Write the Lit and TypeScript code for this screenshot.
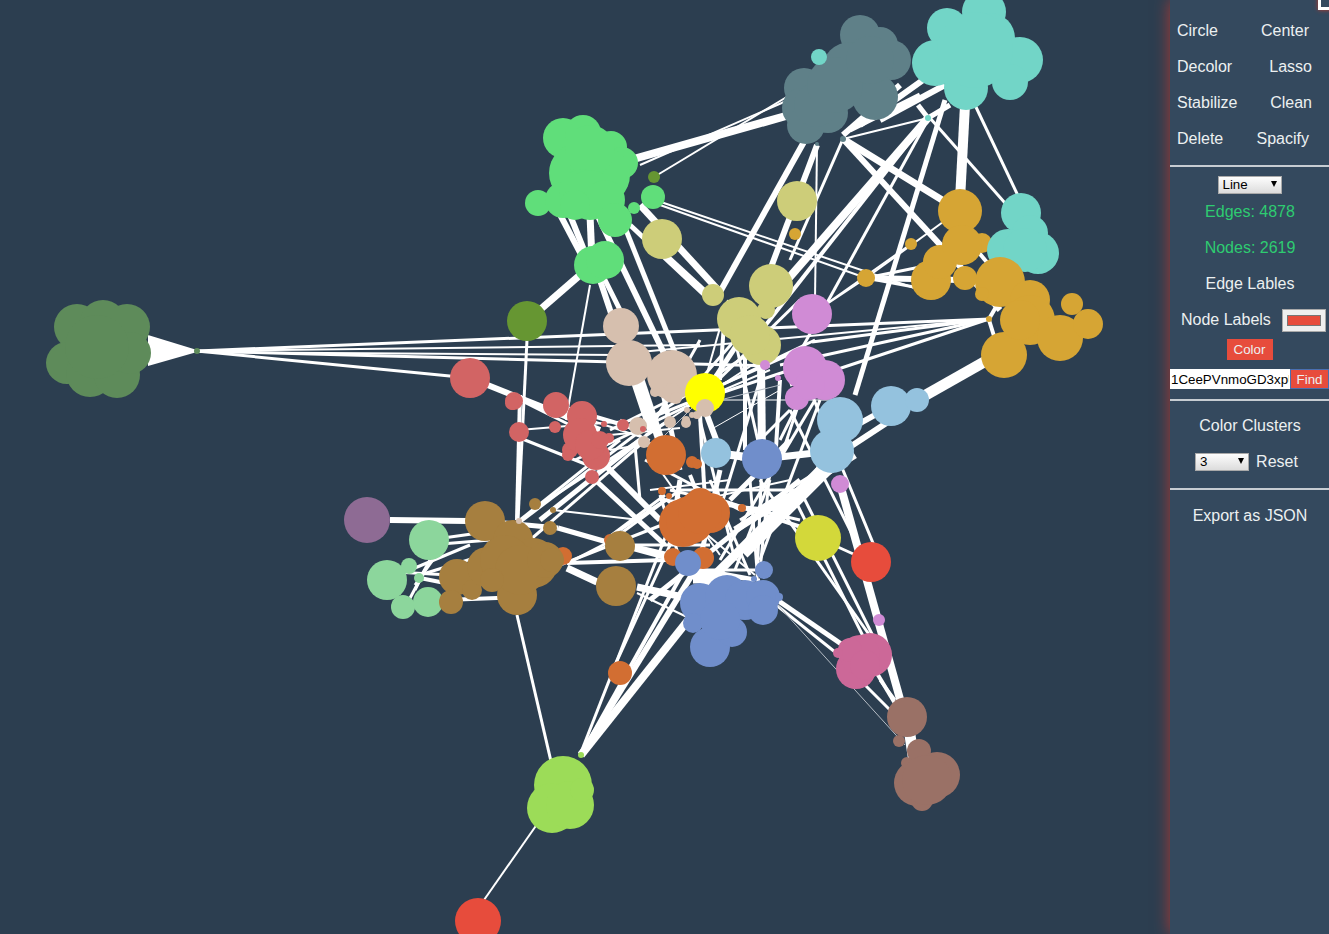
import { LitElement, html, css, svg } from "lit";
import { customElement } from "lit/decorators.js";

type C = [number, number, number];
const CL: Record<string, { c: string; n: C[] }> = {
  dgreen: { c: "#5e8b5a", n: [[77,327,23],[103,323,23],[127,327,23],[67,363,21],[90,373,24],[117,375,23],[130,353,21],[97,347,32],[197,351,3]] },
  purple: { c: "#8e6b94", n: [[367,520,23]] },
  lgreen: { c: "#8cd69c", n: [[429,540,20],[387,580,20],[409,566,8],[403,607,12],[428,602,15],[419,578,5]] },
  orange: { c: "#d26e32", n: [[563,556,9],[610,540,6],[620,673,12],[666,455,20],[692,462,6],[697,464,5],[662,491,4],[669,496,3],[742,508,4],[683,523,24],[710,513,20],[700,503,15],[690,520,24],[700,512,22],[673,557,9],[703,558,11]] },
  brown: { c: "#a67f3f", n: [[485,521,20],[513,540,20],[517,595,20],[616,586,20],[620,546,15],[457,577,18],[451,602,12],[472,590,10],[535,504,6],[553,510,3],[550,528,7],[487,567,20],[533,563,25],[505,560,25],[520,570,25],[492,580,12],[545,560,18],[552,560,12]] },
  blue: { c: "#708ecb", n: [[762,459,20],[688,563,13],[764,570,9],[754,579,3],[700,603,20],[727,597,22],[745,600,20],[763,597,17],[763,610,15],[710,647,20],[732,632,15],[693,623,10],[720,620,20],[779,597,4]] },
  lblue: { c: "#94c2de", n: [[840,420,23],[832,451,22],[891,406,20],[917,400,12],[716,453,15]] },
  olive: { c: "#cdcd79", n: [[797,201,20],[662,239,20],[713,295,11],[771,286,22],[739,319,22],[761,345,20],[750,335,20],[766,310,9]] },
  tan: { c: "#d6bfae", n: [[621,326,18],[629,363,23],[672,375,25],[638,426,9],[670,422,6],[644,442,6],[686,420,4],[692,415,3],[672,393,10],[655,392,5],[676,398,6],[687,410,3],[686,423,5],[697,415,4],[519,521,3]] },
  yellow: { c: "#ffff00", n: [[705,393,20]] },
  tan2: { c: "#d6bfae", n: [[705,408,9]] },
  mauve: { c: "#d08bd5", n: [[812,314,20],[805,368,22],[825,380,20],[797,398,12],[810,385,15],[840,484,9],[879,620,6],[765,365,5],[778,378,3]] },
  salmon: { c: "#d26464", n: [[470,378,20],[514,401,9],[512,403,7],[556,405,13],[519,432,10],[555,427,6],[582,416,15],[596,456,14],[592,477,7],[570,450,8],[568,455,6],[580,435,17],[590,445,15],[609,438,5],[604,424,3],[623,425,6],[643,429,3],[600,440,9]] },
  ogreen: { c: "#669632", n: [[527,321,20],[654,177,6]] },
  green: { c: "#60de7a", n: [[563,138,20],[583,133,18],[611,147,16],[622,163,16],[579,173,30],[600,175,30],[590,150,25],[538,203,13],[563,200,18],[583,193,24],[590,195,25],[605,200,20],[575,205,15],[615,220,17],[653,197,12],[634,208,6],[593,265,19],[605,260,19]] },
  dteal: { c: "#5f8088", n: [[860,35,20],[880,45,18],[891,60,20],[875,97,23],[804,88,20],[802,108,20],[806,125,19],[828,113,20],[816,105,22],[850,70,28],[835,85,28],[870,60,24],[843,139,3],[817,144,2]] },
  goldb: { c: "#d6a534", n: [[982,243,10]] },
  teal: { c: "#72d5c7", n: [[819,57,8],[928,118,3],[947,28,20],[984,12,22],[990,38,25],[1020,60,23],[1010,82,18],[966,88,22],[935,63,23],[975,50,38],[1021,213,20],[1030,233,18],[1038,253,21],[1008,250,21],[1025,250,22]] },
  gold: { c: "#d6a534", n: [[960,211,22],[795,234,6],[866,278,9],[911,244,6],[989,319,3],[931,280,20],[940,262,17],[962,245,20],[965,278,12],[1000,282,25],[1030,300,20],[1030,320,25],[1060,338,23],[1004,355,23],[1072,304,11],[1088,324,15],[1020,320,20],[982,294,7]] },
  lime: { c: "#9cdc58", n: [[563,785,29],[552,808,25],[570,805,24],[582,790,12],[581,755,3]] },
  red: { c: "#e74c3c", n: [[871,562,20],[478,921,23]] },
  ylime: { c: "#d3d83a", n: [[818,538,23]] },
  pink: { c: "#cc6898", n: [[870,655,22],[856,669,20],[860,655,20],[850,650,12],[838,653,5],[865,665,15]] },
  rosy: { c: "#9a7166", n: [[907,717,20],[899,741,6],[919,751,12],[937,775,23],[917,783,23],[922,800,11],[907,763,6],[927,780,25]] },
};

const E: number[][] = [
  [197,351,990,319,3],[197,351,470,378,3],[197,351,770,366,3],[197,351,700,345,2],[197,352,620,355,2],
  [989,319,812,342,3],[989,319,780,365,3],[989,319,790,385,3],[989,319,640,352,2],[989,320,1000,355,4],[989,319,1000,300,4],
  [630,160,800,112,8],[640,165,800,95,2],[654,177,790,95,2],
  [570,215,590,265,6],[555,205,585,262,6],[590,215,592,260,7],[600,280,650,430,6],[595,210,672,370,6],[620,215,690,390,5],[580,275,527,321,7],[590,285,566,420,2],
  [640,205,720,292,7],[630,225,710,300,5],[660,205,866,278,2],[655,200,935,295,2],[600,270,625,320,5],[650,240,710,295,4],
  [805,140,720,292,6],[817,145,770,270,6],[817,145,815,300,2],[843,139,790,260,3],[843,139,960,211,7],[843,139,1000,310,6],[843,139,928,118,2],[843,135,900,85,6],[860,125,930,75,6],[880,120,945,85,6],[850,130,920,95,5],
  [928,118,735,340,8],[928,118,750,345,4],[930,118,1020,220,3],[965,105,960,200,10],[975,105,1020,200,3],[925,125,790,370,3],[945,100,855,395,5],[918,105,928,118,5],[950,105,928,118,5],
  [866,278,960,280,6],[866,278,930,265,3],[866,278,930,290,3],[866,278,943,222,2],[866,278,812,314,2],[911,244,812,314,2],[960,230,1010,290,4],
  [917,400,1000,353,11],[891,406,830,440,6],[891,420,830,460,6],[850,440,700,590,9],[780,520,840,440,5],
  [716,453,762,459,8],[762,459,832,451,7],[761,360,762,459,8],[745,340,745,450,4],[762,459,757,580,3],[735,340,760,450,3],[800,400,780,460,3],[810,390,880,560,3],[790,410,865,560,3],
  [840,484,905,717,8],[818,538,871,562,3],[760,480,880,650,3],[790,490,865,640,3],[800,490,875,640,3],[770,595,850,650,5],[770,600,845,660,3],[860,680,900,720,3],[880,680,895,700,3],[875,670,905,720,4],[910,735,918,790,11],
  [581,755,720,580,8],[581,755,695,570,6],[581,755,690,560,4],[580,755,668,530,3],[615,665,670,545,3],[517,615,553,770,3],[477,910,540,820,2],
  [520,395,517,520,4],[527,340,518,520,3],[520,520,620,440,3],[390,520,467,521,6],[485,521,558,528,5],[558,528,607,542,5],[633,547,667,555,6],[620,546,690,565,3],[637,587,683,597,7],[637,593,687,617,2],[567,568,597,582,7],[567,563,667,560,4],[570,562,607,543,3],[560,565,700,510,3],[445,600,520,597,4],
  [429,540,500,530,3],[429,545,490,540,3],[410,570,470,545,3],[420,575,500,550,3],[415,585,440,550,3],[420,578,480,590,4],[415,590,425,570,3],[409,600,425,570,3],[395,572,450,575,3],[430,560,420,578,3],
  [470,378,600,430,6],[520,400,600,440,3],[556,405,640,430,4],[519,430,640,420,2],[520,438,600,470,3],
  [592,477,665,545,5],[600,460,660,520,6],[635,435,490,545,3],[640,440,540,520,5],[700,400,575,460,3],[670,420,540,505,3],
  [645,440,620,420,3],[590,420,650,440,2],[610,450,670,440,2],[610,435,680,428,2],
  [640,380,665,455,9],[660,380,680,470,5],[705,410,720,450,6],[700,415,705,500,4],[720,470,700,560,5],[700,420,735,560,3],[800,480,650,600,5],[770,480,735,570,3],
  [705,393,800,300,3],[705,393,740,340,5],[705,393,815,340,3],[710,390,800,350,3],[700,380,735,340,3],[715,395,790,370,3],[700,400,770,370,2],[720,400,850,400,1],[710,430,780,390,1],
  [640,425,770,340,3],[620,430,720,390,3],[610,430,710,380,3],[645,435,760,360,2],[650,430,700,340,3],[725,310,720,380,4],[728,300,705,380,2],
  [645,460,740,510,3],[660,470,720,555,2],[605,545,680,490,3],[605,540,665,495,3],[620,530,665,500,3],[610,545,710,545,3],[660,500,780,510,3],[680,490,800,490,3],[670,490,800,520,3],[660,495,680,560,3],[680,480,670,545,5],[690,475,700,500,4],
  [720,500,810,530,4],[730,500,790,440,5],[650,490,730,480,2],[660,495,755,575,2],[700,570,755,580,5],[700,575,760,580,3],[693,577,717,577,13],[680,570,760,570,3],[710,480,750,575,3],[750,480,757,570,3],[770,470,760,570,3],
  [735,530,855,455,7],[700,500,790,480,2],[740,520,820,470,3],[745,555,830,470,7],
  [780,380,775,465,4],[820,400,760,560,3],[790,410,740,460,3],[800,400,780,440,3],[815,400,720,560,3],[760,380,720,510,3],
  [635,445,640,500,3],[530,540,640,445,3],[553,510,640,520,2],
];
const GREY: number[][] = [[755,580,905,745,1],[660,440,700,400,1],[720,400,780,385,1]];

const FAN = "148,335 197,350 197,352 148,366";

@customElement("app-graph")
class AppGraph extends LitElement {
  static styles = css`
    :host { display: block; width: 100%; height: 100%; }
    svg { display: block; width: 100%; height: 100%; }
    .edge { stroke: #fff; stroke-linecap: butt; }
    .thin { stroke: #b5bcc4; }
    .fan { fill: #fff; }
  `;
  render() {
    const line = (e: number[], cls: string) => svg`<line class=${cls} x1=${e[0]} y1=${e[1]} x2=${e[2]} y2=${e[3]} stroke-width=${e[4]}></line>`;
    return html`<svg viewBox="0 0 1170 934" xmlns="http://www.w3.org/2000/svg">
      <polygon class="fan" points=${FAN}></polygon>
      ${E.map((e) => line(e, "edge"))}
      ${GREY.map((e) => line(e, "edge thin"))}
      ${Object.values(CL).map((g) => svg`<g fill=${g.c}>${g.n.map((n) => svg`<circle cx=${n[0]} cy=${n[1]} r=${n[2]}></circle>`)}</g>`)}
    </svg>`;
  }
}

@customElement("app-root")
class AppRoot extends LitElement {
  static styles = css`
    :host { display: block; height: 934px; background: #2c3e50; overflow: hidden; position: relative; font-family: "Liberation Sans", Arial, sans-serif; }
    .wrap { display: flex; height: 100%; }
    .canvas { flex: 1; min-width: 0; }
    .panel { position: relative; width: 159px; flex: none; background: #34495e; box-shadow: 0 0 15px #aa3a34; color: #ecf0f1; font-size: 16px; padding-top: 13px; box-sizing: border-box; }
    .corner { position: absolute; right: -10px; top: -12px; width: 15px; height: 16px; border: 3px solid #fff; box-shadow: 0 0 4px #c0392b; }
    .row { display: flex; justify-content: space-between; height: 36px; line-height: 36px; padding: 0 20px 0 7px; }
    .row.p17 { padding-right: 17px; }
    .row.p16 { padding-right: 17px; }
    hr { border: 0; border-top: 2px solid #c6ccd2; margin: 0; }
    .rule1 { margin-top: 8px; }
    .center { display: flex; justify-content: center; align-items: center; height: 36px; padding-left: 1px; }
    .green { color: #2ecc71; }
    .sel { position: relative; display: inline-block; height: 18px; box-sizing: border-box; border: 1px solid #a9a9a9; background: linear-gradient(#fdfdfd, #dcdcdc); color: #000; font-size: 13.33px; line-height: 16px; padding-left: 4px; }
    .sel select { appearance: none; border: 0; background: transparent; font: inherit; color: inherit; padding: 0; margin: 0; width: 100%; height: 100%; outline: none; }
    .sel::after { content: ""; position: absolute; right: 4px; top: 4px; width: 0; height: 0; border: 3.5px solid transparent; border-top: 6px solid #000; border-bottom: 0; pointer-events: none; }
    .s1 { width: 64px; }
    .s2 { width: 54px; }
    .sel-row { height: 18px; margin-top: 9px; display: flex; justify-content: center; }
    .labels { display: flex; align-items: center; height: 36px; padding-left: 11px; gap: 11px; }
    .labels input { width: 44px; height: 23px; padding: 1px 2px; box-sizing: border-box; margin: 0; background: #efefef; border: 1px solid #a9a9a9; }
    .btn { background: #e74c3c; color: #ecf0f1; font: 13.33px "Liberation Sans", Arial, sans-serif; border: 0; padding: 0; height: 21px; }
    .btn.color { width: 46px; display: block; margin: 1px auto 0; }
    .find { display: flex; margin-top: 9px; height: 20px; }
    .find input { width: 120px; box-sizing: border-box; border: 0; margin: 0; padding: 0 1px; height: 20px; font: 13.33px "Liberation Sans", Arial, sans-serif; background: #fff; color: #000; outline: none; }
    .find .btn { width: 39px; height: 20px; box-shadow: inset 0 0 0 1px #4a6fb0; }
    .rule2 { margin-top: 10px; }
    .clusters-title { margin-top: 7px; }
    .rule3 { margin-top: 8px; }
    .clusters { gap: 7px; height: 36px; padding: 0 6px 0 0; }
    .export { height: 52px; }
  `;
  render() {
    return html`<div class="wrap">
      <div class="canvas"><app-graph></app-graph></div>
      <div class="panel">
        <div class="corner"></div>
        <div class="row"><span>Circle</span><span>Center</span></div>
        <div class="row p17"><span>Decolor</span><span>Lasso</span></div>
        <div class="row p16"><span>Stabilize</span><span>Clean</span></div>
        <div class="row"><span>Delete</span><span>Spacify</span></div>
        <hr class="rule1" />
        <div class="sel-row"><span class="sel s1"><select><option>Line</option><option>Curve</option></select></span></div>
        <div class="center green">Edges: 4878</div>
        <div class="center green">Nodes: 2619</div>
        <div class="center">Edge Lables</div>
        <div class="labels"><span>Node Labels</span><input type="color" value="#e74c3c" /></div>
        <button class="btn color">Color</button>
        <div class="find"><input value="1CeePVnmoGD3xpUwq" /><button class="btn">Find</button></div>
        <hr class="rule2" />
        <div class="center clusters-title">Color Clusters</div>
        <div class="center clusters"><span class="sel s2"><select><option>3</option><option>4</option></select></span><span>Reset</span></div>
        <hr class="rule3" />
        <div class="center export">Export as JSON</div>
      </div>
    </div>`;
  }
}
